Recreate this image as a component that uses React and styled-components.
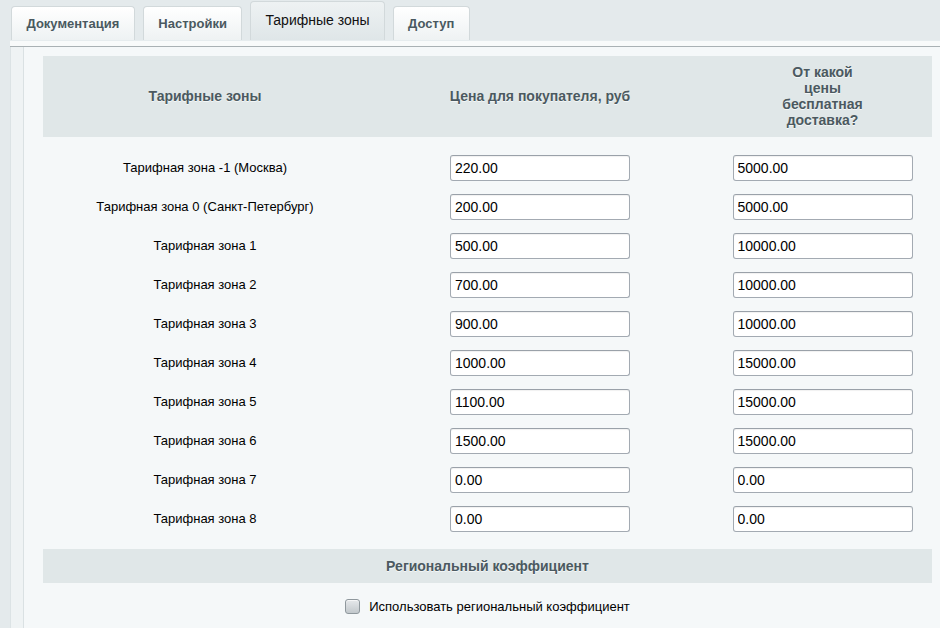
import React from 'react'
import styled, { createGlobalStyle } from 'styled-components'

const GlobalStyle = createGlobalStyle`
  html, body {
    margin: 0;
    padding: 0;
    background: #e4eaec;
    font-family: "Liberation Sans", Arial, sans-serif;
    font-size: 13px;
    color: #000;
  }
`

const Page = styled.div`
  width: 940px;
  height: 628px;
  overflow: hidden;
`

const TabBar = styled.div`
  display: flex;
  align-items: flex-end;
  gap: 8px;
  height: 40px;
  padding-left: 11px;
`

const Tab = styled.div`
  box-sizing: border-box;
  height: ${p => (p.$active ? '39px' : '34px')};
  padding: 0 ${p => (p.$active ? 14 : 14.5)}px;
  display: flex;
  align-items: center;
  justify-content: center;
  border: 1px solid #d2d9db;
  border-bottom: none;
  border-radius: 4px 4px 0 0;
  background: ${p =>
    p.$active
      ? 'linear-gradient(#eef2f3, #dfe6e8)'
      : 'linear-gradient(#ffffff, #eef2f3)'};
  color: ${p => (p.$active ? '#111' : '#4a5960')};
  font-weight: ${p => (p.$active ? 400 : 700)};
  font-size: ${p => (p.$active ? '14px' : '13px')};
  padding-bottom: ${p => (p.$active ? '2px' : '0')};
`

const TabLine = styled.div`
  margin-left: 10px;
  height: 5px;
  background: #f8fafa;
  border-top: 1px solid #e6ecee;
  border-bottom: 1px solid #a9b1b4;
`

const Panel = styled.div`
  margin-left: 10px;
  display: flex;
  background: #eff3f4;
  border-left: 1px solid #dce3e5;
  min-height: 600px;
`

const Band = styled.div`
  width: 12px;
  flex: none;
  border-right: 1px solid #dae1e3;
`

const Content = styled.div`
  flex: 1;
  background: #f5f8f9;
  padding: 9px 8px 0 19px;
`

const Grid = styled.div`
  display: grid;
  grid-template-columns: 324px 346px 219px;
`

const HeadCell = styled.div`
  background: #e0e7e8;
  min-height: 81px;
  display: flex;
  align-items: center;
  justify-content: center;
  text-align: center;
  font-weight: 700;
  font-size: 14px;
  color: #4b5960;
  text-shadow: 0 1px 0 #f4f7f7;
  line-height: 16px;
  box-sizing: border-box;
  padding: 8px 0 9px;
`

const HeadText = styled.span`
  max-width: ${p => p.$max || 'none'};
`

const Body = styled.div`
  display: grid;
  grid-template-columns: 324px 346px 219px;
  grid-auto-rows: 39px;
  padding-top: 11px;
`

const Label = styled.div`
  display: flex;
  align-items: center;
  justify-content: center;
  color: #000;
  font-size: 13px;
`

const Field = styled.div`
  display: flex;
  align-items: center;
  justify-content: center;
`

const Input = styled.input`
  box-sizing: border-box;
  width: 180px;
  height: 26px;
  border: 1px solid #a3aab2;
  border-top-color: #9aa1a9;
  border-radius: 3px;
  background: #fff;
  padding: 0 4px;
  font-family: "Liberation Sans", Arial, sans-serif;
  font-size: 14px;
  color: #000;
  box-shadow: inset 0 1px 1px rgba(0, 0, 0, 0.06);
  outline: none;
`

const Section = styled.div`
  margin-top: 11px;
  width: 889px;
  height: 34px;
  background: #e0e7e8;
  display: flex;
  align-items: center;
  justify-content: center;
  font-weight: 700;
  font-size: 14px;
  color: #4b5960;
  text-shadow: 0 1px 0 #f4f7f7;
`

const CheckRow = styled.label`
  width: 889px;
  display: flex;
  align-items: center;
  justify-content: center;
  gap: 9px;
  padding-top: 16px;
  font-size: 13px;
  color: #000;
`

const Box = styled.span`
  width: 13px;
  height: 13px;
  border: 1px solid #8f989d;
  border-radius: 3px;
  background: linear-gradient(#e6e9eb, #c2c8cc);
  box-shadow: inset 0 1px 0 #f5f6f7;
  flex: none;
`

const rows = [
  ['Тарифная зона -1 (Москва)', '220.00', '5000.00'],
  ['Тарифная зона 0 (Санкт-Петербург)', '200.00', '5000.00'],
  ['Тарифная зона 1', '500.00', '10000.00'],
  ['Тарифная зона 2', '700.00', '10000.00'],
  ['Тарифная зона 3', '900.00', '10000.00'],
  ['Тарифная зона 4', '1000.00', '15000.00'],
  ['Тарифная зона 5', '1100.00', '15000.00'],
  ['Тарифная зона 6', '1500.00', '15000.00'],
  ['Тарифная зона 7', '0.00', '0.00'],
  ['Тарифная зона 8', '0.00', '0.00'],
]

export default function App() {
  return (
    <Page>
      <GlobalStyle />
      <TabBar>
        <Tab>Документация</Tab>
        <Tab>Настройки</Tab>
        <Tab $active>Тарифные зоны</Tab>
        <Tab>Доступ</Tab>
      </TabBar>
      <TabLine />
      <Panel>
        <Band />
        <Content>
          <Grid>
            <HeadCell>Тарифные зоны</HeadCell>
            <HeadCell>Цена для покупателя, руб</HeadCell>
            <HeadCell>
              <HeadText $max="82px">От какой цены бесплатная доставка?</HeadText>
            </HeadCell>
          </Grid>
          <Body>
            {rows.map(([name, price, free]) => (
              <React.Fragment key={name}>
                <Label>{name}</Label>
                <Field>
                  <Input type="text" defaultValue={price} />
                </Field>
                <Field>
                  <Input type="text" defaultValue={free} />
                </Field>
              </React.Fragment>
            ))}
          </Body>
          <Section>Региональный коэффициент</Section>
          <CheckRow>
            <Box />
            <span>Использовать региональный коэффициент</span>
          </CheckRow>
        </Content>
      </Panel>
    </Page>
  )
}
